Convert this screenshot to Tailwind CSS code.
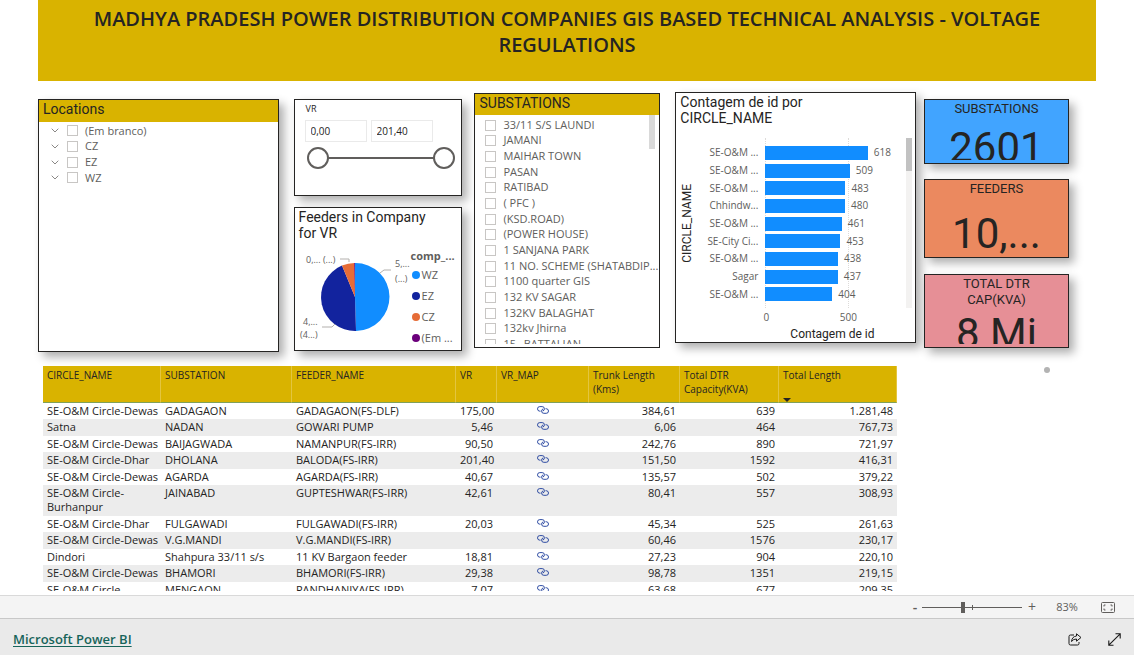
<!DOCTYPE html>
<html lang="pt">
<head>
<meta charset="utf-8">
<meta name="viewport" content="width=device-width, initial-scale=1">
<title>Microsoft Power BI</title>
<script src="https://cdn.jsdelivr.net/npm/@tailwindcss/browser@4"></script>
</head>
<body class="flex h-screen flex-col overflow-hidden bg-white font-['Open_Sans','Noto_Sans',sans-serif] text-[11px] text-[#252423]">

<svg class="hidden">
  <symbol id="link" viewBox="0 0 12 8"><g fill="none" stroke="#1a3a9a" stroke-width=".9"><path d="M3.500 5.200H2.800Q.5 5 .5 2.900 .5 .6 2.800 .6H5.200Q7.400 .6 7.400 2.800 7.400 4.600 5.800 5"/><path d="M8.500 2.700H9.200Q11.500 2.900 11.500 5 11.500 7.300 9.200 7.300H6.800Q4.600 7.300 4.600 5.100 4.600 3.300 6.200 2.900"/></g></symbol>
  <symbol id="chevron" viewBox="0 0 8 5"><path d="M.7 .7 4 4 7.3 .7" fill="none" stroke="#8a8886" stroke-width="1"/></symbol>
</svg>

<main class="flex min-h-0 flex-1 flex-col overflow-hidden">
  <header class="mx-[38px] h-[81px] shrink-0 bg-[#d9b300] px-8 pt-1.5 text-center">
    <h1 class="text-[20px] leading-[26px] font-semibold">MADHYA PRADESH POWER DISTRIBUTION COMPANIES GIS BASED TECHNICAL ANALYSIS - VOLTAGE REGULATIONS</h1>
  </header>

  <div class="flex h-[285px] shrink-0 items-start pr-[65px] pl-[38px]">

    <section class="mt-[18px] h-[253px] min-w-0 flex-[240_1_0%] border border-[#252423] bg-white shadow-[5px_5px_9px_rgba(0,0,0,0.32)]">
      <h2 class="h-[22px] bg-[#d9b300] pl-1 font-['Roboto',sans-serif] text-[14px] leading-[18px]">Locations</h2>
      <ul class="pt-px pl-3 text-[#605e5c]" id="locations"></ul>
    </section>

    <div class="mt-[18px] ml-[15px] flex min-w-0 flex-[170_1_0%] flex-col gap-[11px]">
      <section class="h-[97px] border border-[#252423] bg-white pl-[10px] shadow-[5px_5px_9px_rgba(0,0,0,0.32)]">
        <h2 class="pt-0.5 pl-px text-[9px] leading-[14px]">VR</h2>
        <div class="mt-1 flex gap-1">
          <input aria-label="VR mínimo" value="0,00" class="h-[22px] w-[62px] border border-[#eaeaea] px-[5px] text-[10px] outline-none">
          <input aria-label="VR máximo" value="201,40" class="h-[22px] w-[62px] border border-[#eaeaea] px-[5px] text-[10px] outline-none">
        </div>
        <div class="relative mt-[5px] mr-[6px] ml-0.5 flex h-[22px] items-center">
          <div class="mx-5 h-0.5 flex-1 bg-[#605e5c]"></div>
          <input type="range" aria-label="Início do intervalo" min="0" max="201.4" step="any" value="0" class="pointer-events-none absolute inset-0 w-full appearance-none bg-transparent [&::-webkit-slider-thumb]:pointer-events-auto [&::-webkit-slider-thumb]:h-[22px] [&::-webkit-slider-thumb]:w-[22px] [&::-webkit-slider-thumb]:appearance-none [&::-webkit-slider-thumb]:rounded-full [&::-webkit-slider-thumb]:border-2 [&::-webkit-slider-thumb]:border-[#605e5c] [&::-webkit-slider-thumb]:bg-white">
          <input type="range" aria-label="Fim do intervalo" min="0" max="201.4" step="any" value="201.4" class="pointer-events-none absolute inset-0 w-full appearance-none bg-transparent [&::-webkit-slider-thumb]:pointer-events-auto [&::-webkit-slider-thumb]:h-[22px] [&::-webkit-slider-thumb]:w-[22px] [&::-webkit-slider-thumb]:appearance-none [&::-webkit-slider-thumb]:rounded-full [&::-webkit-slider-thumb]:border-2 [&::-webkit-slider-thumb]:border-[#605e5c] [&::-webkit-slider-thumb]:bg-white">
        </div>
      </section>

      <section class="h-[144px] overflow-hidden border border-[#252423] bg-white shadow-[5px_5px_9px_rgba(0,0,0,0.32)]">
        <h2 class="w-[150px] pt-px pl-1 font-['Roboto',sans-serif] text-[14px] leading-4">Feeders in Company for VR</h2>
        <div class="flex">
          <svg class="h-[109px] w-[116px] shrink-0" viewBox="0 1 116 109" font-size="9" fill="#605e5c">
            <path d="M60 57V23A34 34 0 0 1 61 91Z" fill="#118dff"/>
            <path d="M60 57 61 91A34 34 0 0 1 47 25.600Z" fill="#12239e"/>
            <path d="M60 57 47 25.600A34 34 0 0 1 59.500 23Z" fill="#e66c37"/>
            <path d="M60 57 59.200 23H60Z" fill="#6b007b"/>
            <path d="M45 19H54V22M96 30H89L85 33M27 87H37L40 84" fill="none" stroke="#b3b0ad"/>
            <text x="11" y="23">0,... (...)</text>
            <text x="100" y="27">5,...</text>
            <text x="100" y="42">(...)</text>
            <text x="8" y="85">4,...</text>
            <text x="5" y="98">(4...)</text>
          </svg>
          <div class="min-w-0 flex-1 pt-[7px] text-[#605e5c]">
            <h3 class="leading-4 font-bold">comp_...</h3>
            <ul>
              <li class="flex h-[21px] items-center gap-0.5 leading-4"><span class="ml-px size-2 rounded-full bg-[#118dff]"></span>WZ</li>
              <li class="flex h-[21px] items-center gap-0.5 leading-4"><span class="ml-px size-2 rounded-full bg-[#12239e]"></span>EZ</li>
              <li class="flex h-[21px] items-center gap-0.5 leading-4"><span class="ml-px size-2 rounded-full bg-[#e66c37]"></span>CZ</li>
              <li class="flex h-[21px] items-center gap-0.5 leading-4 whitespace-nowrap"><span class="ml-px size-2 rounded-full bg-[#6b007b]"></span>(Em ...</li>
            </ul>
          </div>
        </div>
      </section>
    </div>

    <section class="mt-3 ml-3 flex h-[255px] min-w-0 flex-[185_1_0%] flex-col border border-[#252423] bg-white pb-[3px]">
      <h2 class="h-[21px] shrink-0 bg-[#d9b300] pl-1 font-['Roboto',sans-serif] text-[14px] leading-[18px]">SUBSTATIONS</h2>
      <div class="flex min-h-0 flex-1 overflow-hidden">
        <ul class="min-w-0 flex-1 pt-0.5 pl-[10px] text-[#605e5c]" id="substations"></ul>
        <div class="mr-1 -ml-1.5 h-[34px] w-1.5 shrink-0 bg-[#d9d9d9]"></div>
      </div>
    </section>

    <section class="mt-[11px] ml-[15px] h-[251px] min-w-0 flex-[240_1_0%] border border-[#252423] bg-white shadow-[5px_5px_9px_rgba(0,0,0,0.32)]">
      <h2 class="w-[160px] pt-px pl-1 font-['Roboto',sans-serif] text-[14px] leading-4">Contagem de id por CIRCLE_NAME</h2>
      <div class="mt-3 flex pr-[3px]">
        <div class="flex w-[22px] shrink-0 items-center justify-center">
          <span class="rotate-180 font-['Roboto',sans-serif] text-[12px] leading-4 [writing-mode:vertical-rl]">CIRCLE_NAME</span>
        </div>
        <div class="relative h-[170px] flex-1 pt-1.5">
          <div class="absolute inset-y-0 right-0 left-[67px]">
            <div class="absolute inset-y-0 left-0 border-l border-dotted border-[#dddbd9]"></div>
            <div class="absolute inset-y-0 left-[59%] border-l border-dotted border-[#dddbd9]"></div>
          </div>
          <ul class="relative flex h-[159px] flex-col text-[10px] text-[#605e5c]" id="bars"></ul>
        </div>
        <div class="h-[170px] w-1.5 shrink-0 bg-[#f3f2f1]"><div class="h-[33px] bg-[#c2c2c2]"></div></div>
      </div>
      <div class="ml-[80px] flex text-[10px] leading-[18px] text-[#605e5c]">
        <span class="w-5 text-center">0</span><span class="ml-[60px] w-6 text-center">500</span>
      </div>
      <p class="ml-[114px] font-['Roboto',sans-serif] text-[12px] leading-4">Contagem de id</p>
    </section>

    <div class="mt-[18px] ml-2 flex min-w-0 flex-[146_1_0%] flex-col text-center font-['Roboto',sans-serif]">
      <section class="h-[65px] overflow-hidden border border-[#252423] bg-[#41a4ff] pb-[3px] shadow-[5px_5px_9px_rgba(0,0,0,0.32)]">
        <h2 class="text-[13px] leading-[18px]">SUBSTATIONS</h2>
        <div class="h-[42px] overflow-hidden pt-1 text-[42px] leading-[52px]">2601</div>
      </section>
      <section class="mt-[15px] h-[79px] overflow-hidden border border-[#252423] bg-[#eb895f] shadow-[5px_5px_9px_rgba(0,0,0,0.32)]">
        <h2 class="text-[13px] leading-[18px]">FEEDERS</h2>
        <div class="pt-2.5 text-[42px] leading-[52px]">10,...</div>
      </section>
      <section class="mt-4 h-[74px] overflow-hidden border border-[#252423] bg-[#e68f96] shadow-[5px_5px_9px_rgba(0,0,0,0.32)]">
        <h2 class="px-6 pt-px text-[13px] leading-4">TOTAL DTR CAP(KVA)</h2>
        <div class="h-[36px] overflow-hidden text-[42px] leading-[52px]">8 Mi</div>
      </section>
    </div>
  </div>

  <div class="flex min-h-0 flex-1 items-start justify-between pr-[84px] pb-1 pl-[43px]">
    <div class="h-full w-[85%] max-w-[854px] overflow-hidden">
      <table class="w-full table-fixed border-separate border-spacing-0">
        <colgroup><col class="w-[118px]"><col class="w-[131px]"><col class="w-[164px]"><col class="w-[41px]"><col class="w-[92px]"><col class="w-[91px]"><col class="w-[99px]"><col class="w-[118px]"></colgroup>
        <thead class="bg-[#d9b300] text-left align-top text-[10px] leading-[14px]">
          <tr class="h-[37px] [&>th]:border-r [&>th]:border-b [&>th]:border-r-[#e3c53f] [&>th]:border-b-[#7fa05a] [&>th]:px-1 [&>th]:pt-0.5 [&>th]:font-normal">
            <th>CIRCLE_NAME</th><th>SUBSTATION</th><th>FEEDER_NAME</th><th>VR</th><th>VR_MAP</th><th>Trunk Length (Kms)</th><th>Total DTR Capacity(KVA)</th>
            <th><span class="block h-[26px]">Total Length</span><svg class="mt-1 h-1 w-2" viewBox="0 0 8 4"><path d="M0 0H8L4 4Z" fill="#252423"/></svg></th>
          </tr>
        </thead>
        <tbody id="rows" class="align-top leading-[14px]"></tbody>
      </table>
    </div>
    <span class="mt-px size-1.5 rounded-full bg-[#b3b3b3]"></span>
  </div>
</main>

<div class="flex h-[23px] shrink-0 items-center justify-end border-t border-[#d9d9d9] bg-[#f4f4f4] pr-[19px] text-[#605e5c]">
  <button aria-label="Reduzir" class="w-[14px] text-[14px] leading-4 font-semibold">-</button>
  <div class="relative flex w-[100px] items-center">
    <span class="absolute left-1/2 h-[5px] w-px bg-[#605e5c]"></span>
    <input type="range" aria-label="Zoom" min="0" max="100" value="41" class="h-3 w-full appearance-none bg-transparent [&::-webkit-slider-runnable-track]:h-px [&::-webkit-slider-runnable-track]:bg-[#605e5c] [&::-webkit-slider-thumb]:-mt-[5px] [&::-webkit-slider-thumb]:h-[11px] [&::-webkit-slider-thumb]:w-1 [&::-webkit-slider-thumb]:appearance-none [&::-webkit-slider-thumb]:bg-[#605e5c]">
  </div>
  <button aria-label="Ampliar" class="w-5 text-[14px] leading-4">+</button>
  <span class="ml-3 w-[26px] text-center leading-4">83%</span>
  <button aria-label="Ajustar à página" class="ml-[21px]"><svg class="h-[11px] w-[14px]" viewBox="0 0 14 11" fill="none" stroke="#605e5c"><rect x=".5" y=".5" width="13" height="10" rx="1"/><path d="M3 4.500V3H4.500M9.500 3H11V4.500M11 6.500V8H9.500M4.500 8H3V6.500"/></svg></button>
</div>

<footer class="flex h-[37px] shrink-0 items-center justify-between border-t border-[#c8c8c8] bg-[#eaeaea] pr-[13px] pl-[13px]">
  <a href="#" class="pt-1 text-[13px] leading-5 font-semibold text-[#17645a] underline underline-offset-2">Microsoft Power BI</a>
  <div class="flex items-center gap-[26px] pt-1">
    <button aria-label="Compartilhar"><svg class="h-[13px] w-[14px]" viewBox="0 0 14 13" fill="none" stroke="#1a1a1a" stroke-linejoin="round"><path d="M6 2H2.500Q1 2 1 3.500V10.500Q1 12 2.500 12H9.500Q11 12 11 10.500V9"/><path d="M8.500 .8 13 4.500 8.500 8.200V6Q5.500 5.800 3.500 8.500 4 3.500 8.500 3Z"/></svg></button>
    <button aria-label="Tela cheia"><svg class="h-[13px] w-[13px]" viewBox="0 0 13 13" fill="none" stroke="#1a1a1a" stroke-width="1.100"><path d="M.8 12.200 12.200 .8M7.500 .8H12.200V5.500M.8 7.500V12.200H5.500"/></svg></button>
  </div>
</footer>

<script>
const box = 'size-[11px] shrink-0 appearance-none border border-[#c8c6c4] bg-white';
document.getElementById('locations').innerHTML = ['(Em branco)', 'CZ', 'EZ', 'WZ'].map(t =>
  `<li class="flex h-4 items-center [&:nth-child(3n+1)]:h-[15px]"><button aria-label="Expandir ${t}"><svg class="h-[5px] w-2"><use href="#chevron"/></svg></button><label class="ml-2 flex items-center gap-[7px] leading-4"><input type="checkbox" class="${box}">${t}</label></li>`).join('');
document.getElementById('substations').innerHTML = ['33/11 S/S LAUNDI', 'JAMANI', 'MAIHAR TOWN', 'PASAN', 'RATIBAD', '( PFC )', '(KSD.ROAD)', '(POWER HOUSE)', '1 SANJANA PARK', '11 NO. SCHEME (SHATABDIP...', '1100 quarter GIS', '132 KV SAGAR', '132KV BALAGHAT', '132kv Jhirna', '15_ BATTALIAN'].map(t =>
  `<li class="h-4 [&:nth-child(3n+1)]:h-[15px]"><label class="flex items-center gap-[7px] leading-4 whitespace-nowrap"><input type="checkbox" class="${box}">${t}</label></li>`).join('');
const seom = 'SE-O&amp;M ...';
document.getElementById('bars').innerHTML = [[seom, 618], [seom, 509], [seom, 483], ['Chhindw...', 480], [seom, 461], ['SE-City Ci...', 453], [seom, 438], ['Sagar', 437], [seom, 404]].map(([n, v]) =>
  `<li class="flex flex-1 items-center"><span class="w-[60px] shrink-0 text-right whitespace-nowrap">${n}</span><div class="ml-[7px] flex flex-1 items-center gap-1.5"><div class="h-[14px] shrink-0 bg-[#118dff]" style="width:${v * 0.118}%"></div><span>${v}</span></div></li>`).join('');
const D = 'SE-O&amp;M Circle-Dewas';
document.getElementById('rows').innerHTML = [
  [D, 'GADAGAON', 'GADAGAON(FS-DLF)', '175,00', '384,61', '639', '1.281,48'],
  ['Satna', 'NADAN', 'GOWARI PUMP', '5,46', '6,06', '464', '767,73'],
  [D, 'BAIJAGWADA', 'NAMANPUR(FS-IRR)', '90,50', '242,76', '890', '721,97'],
  ['SE-O&amp;M Circle-Dhar', 'DHOLANA', 'BALODA(FS-IRR)', '201,40', '151,50', '1592', '416,31'],
  [D, 'AGARDA', 'AGARDA(FS-IRR)', '40,67', '135,57', '502', '379,22'],
  ['SE-O&amp;M Circle-<br>Burhanpur', 'JAINABAD', 'GUPTESHWAR(FS-IRR)', '42,61', '80,41', '557', '308,93'],
  ['SE-O&amp;M Circle-Dhar', 'FULGAWADI', 'FULGAWADI(FS-IRR)', '20,03', '45,34', '525', '261,63'],
  [D, 'V.G.MANDI', 'V.G.MANDI(FS-IRR)', '', '60,46', '1576', '230,17'],
  ['Dindori', 'Shahpura 33/11 s/s', '11 KV Bargaon feeder', '18,81', '27,23', '904', '220,10'],
  [D, 'BHAMORI', 'BHAMORI(FS-IRR)', '29,38', '98,78', '1351', '219,15'],
  ['SE-O&amp;M Circle-<br>Burhanpur', 'MENGAON', 'PANDHANIYA(FS-IRR)', '7,07', '63,68', '677', '209,35']
].map(r => `<tr class="h-4 whitespace-nowrap even:h-[17px] even:bg-[#ececec] [&>td]:px-1 [&>td]:pt-px [&:nth-child(6)>td]:pb-0.5"><td>${r[0]}</td><td>${r[1]}</td><td>${r[2]}</td><td class="text-right">${r[3]}</td><td><a href="#" aria-label="Abrir mapa" class="flex h-3 items-center justify-center"><svg class="h-2 w-3"><use href="#link"/></svg></a></td><td class="text-right">${r[4]}</td><td class="text-right">${r[5]}</td><td class="text-right">${r[6]}</td></tr>`).join('');
</script>
</body>
</html>
